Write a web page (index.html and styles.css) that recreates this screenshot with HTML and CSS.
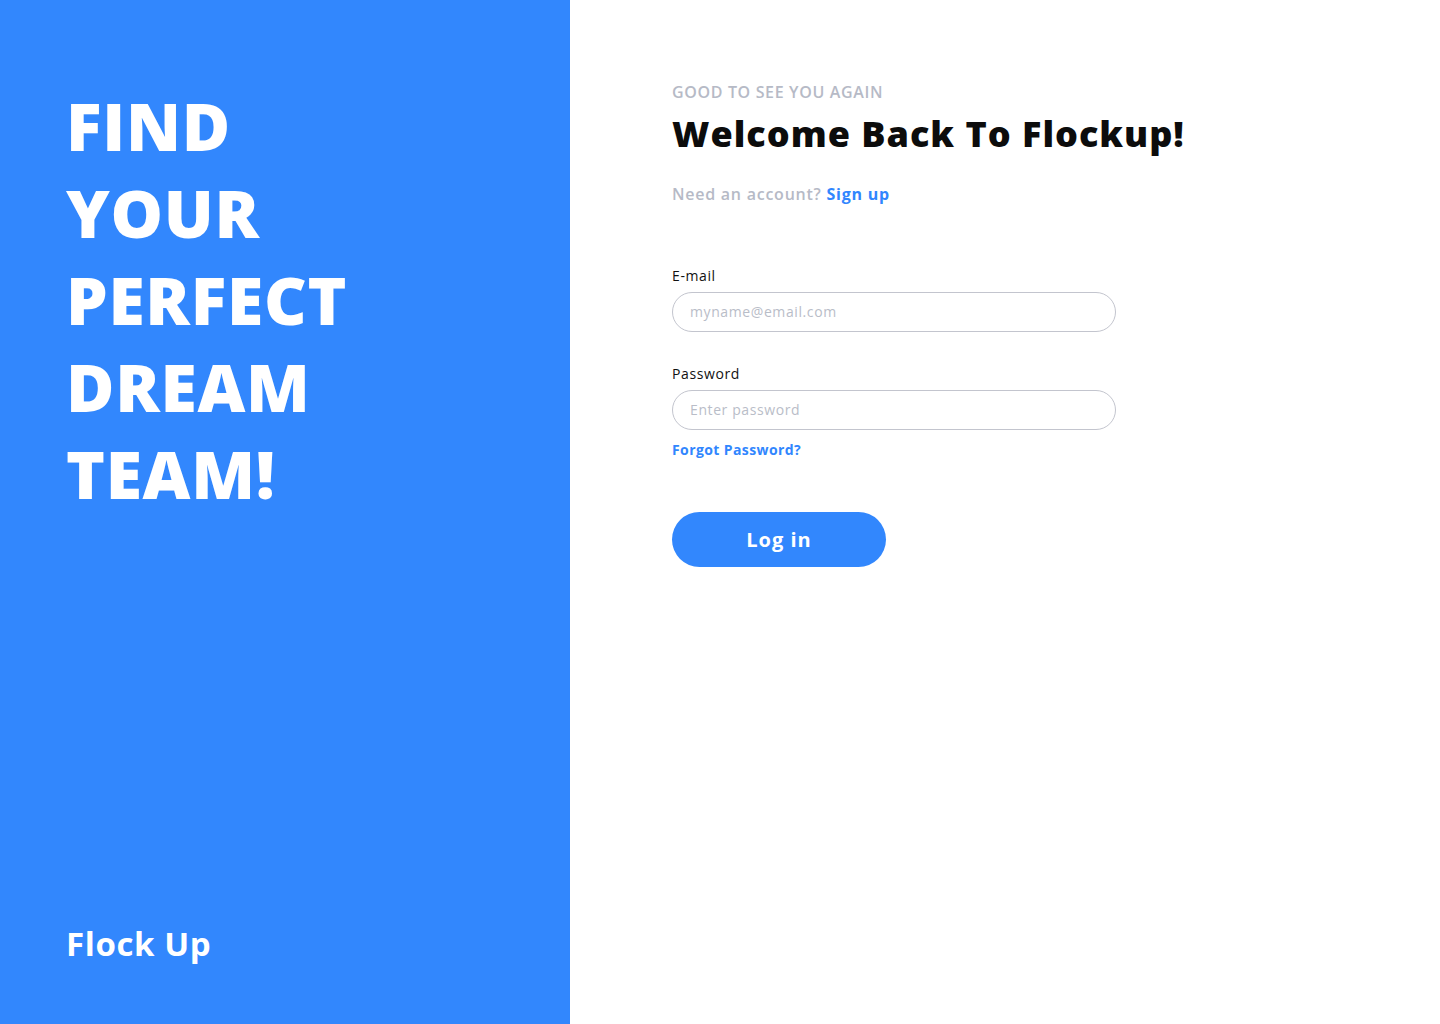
FILE: index.html
```html
<!DOCTYPE html>
<html lang="en">
<head>
<meta charset="utf-8">
<title>Flock Up - Log in</title>
<link rel="stylesheet" href="styles.css">
</head>
<body>
<div class="page">
  <aside class="hero">
    <h1 class="hero-title">FIND<br>YOUR<br>PERFECT<br>DREAM<br>TEAM!</h1>
    <div class="brand">Flock Up</div>
  </aside>
  <main class="content">
    <div class="form-wrap">
      <p class="eyebrow">GOOD TO SEE YOU AGAIN</p>
      <h2 class="title">Welcome Back To Flockup!</h2>
      <p class="signup">Need an account? <a href="#" class="link">Sign up</a></p>
      <form class="form">
        <label class="field">
          <span class="label">E-mail</span>
          <input class="input" type="email" placeholder="myname@email.com">
        </label>
        <label class="field field-pw">
          <span class="label">Password</span>
          <input class="input" type="password" placeholder="Enter password">
        </label>
        <a href="#" class="forgot">Forgot Password?</a>
        <button type="button" class="btn">Log in</button>
      </form>
    </div>
  </main>
</div>
</body>
</html>
```

FILE: styles.css
```css
* { box-sizing: border-box; }
html, body { margin: 0; padding: 0; }
body {
  font-family: "Open Sans", "Liberation Sans", sans-serif;
  background: #fff;
}
.page {
  display: flex;
  width: 1440px;
  height: 1024px;
}
.hero {
  width: 570px;
  flex: none;
  background: #3287fd;
  color: #fff;
  display: flex;
  flex-direction: column;
  justify-content: space-between;
  padding: 82px 0 58px 66px;
}
.hero-title {
  margin: 0;
  font-size: 66px;
  font-weight: 800;
  line-height: 87px;
  letter-spacing: 0.7px;
}
.brand {
  font-size: 33px;
  font-weight: 700;
  letter-spacing: 0.6px;
  line-height: 44px;
}
.content {
  flex: 1;
  padding: 80px 0 0 102px;
}
.form-wrap { width: 600px; }
.eyebrow {
  margin: 0;
  font-size: 16px;
  font-weight: 600;
  letter-spacing: 0.65px;
  color: #b6bac6;
  line-height: 24px;
}
.title {
  margin: 5px 0 0;
  font-size: 36px;
  font-weight: 800;
  letter-spacing: 1px;
  color: #0c0c0c;
  line-height: 50px;
}
.signup {
  margin: 23px 0 0;
  font-size: 16px;
  font-weight: 600;
  color: #b6bac6;
  letter-spacing: 0.75px;
  line-height: 24px;
}
.link {
  color: #3186fe;
  font-weight: 700;
  text-decoration: none;
}
.form {
  margin-top: 60px;
  display: flex;
  flex-direction: column;
  align-items: flex-start;
}
.field {
  display: flex;
  flex-direction: column;
}
.field-pw { margin-top: 32px; }
.label {
  font-size: 14px;
  font-weight: 500;
  letter-spacing: 0.6px;
  color: #111;
  line-height: 20px;
  margin-bottom: 6px;
}
.input {
  width: 444px;
  height: 40px;
  border: 1px solid #c3c5ce;
  border-radius: 20px;
  padding: 0 17px 2px;
  font-family: inherit;
  font-size: 14px;
  letter-spacing: 0.6px;
  color: #111;
  outline: none;
  background: #fff;
}
.input::placeholder { color: #b9bdc8; }
.forgot {
  margin-top: 10px;
  font-size: 14px;
  font-weight: 700;
  color: #3186fe;
  letter-spacing: 0.4px;
  text-decoration: none;
  line-height: 20px;
}
.btn {
  margin-top: 52px;
  width: 214px;
  height: 55px;
  border: none;
  border-radius: 28px;
  background: #3287fd;
  color: #fff;
  font-family: inherit;
  font-size: 20px;
  font-weight: 700;
  letter-spacing: 1px;
  cursor: pointer;
}
```
